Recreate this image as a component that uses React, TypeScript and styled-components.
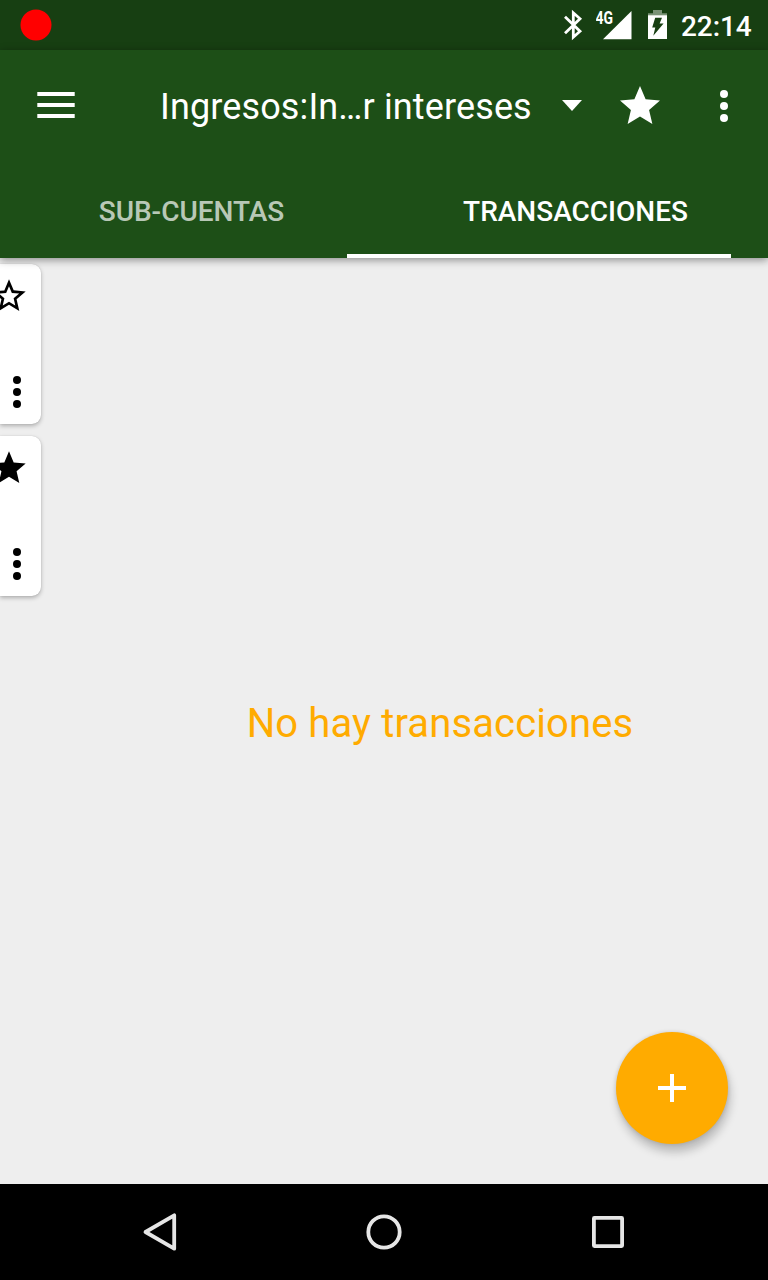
import React from "react";
import styled, { createGlobalStyle } from "styled-components";

const GlobalStyle = createGlobalStyle`
  * { box-sizing: border-box; }
  body { margin: 0; font-family: Roboto, "Liberation Sans", sans-serif; }
  svg { display: block; flex: none; }
`;

const Screen = styled.div`
  display: flex;
  flex-direction: column;
  width: 768px;
  height: 1280px;
  overflow: hidden;
  background: #eeeeee;
`;

const StatusBar = styled.div`
  display: flex;
  align-items: center;
  justify-content: space-between;
  height: 50px;
  padding: 0 16px 0 20px;
  background: #173f12;
  flex: none;
`;

const StatusIcons = styled.div`
  display: flex;
  align-items: center;
  height: 50px;
`;

const SignalSlot = styled.div`
  margin: 0 16px 0 13px;
`;

const Clock = styled.span`
  width: 71px;
  margin-left: 13px;
  color: #fff;
  font-size: 28px;
  font-weight: 500;
  line-height: 32px;
  letter-spacing: -0.1px;
  padding-top: 3px;
  white-space: nowrap;
`;

const Header = styled.header`
  position: relative;
  z-index: 1;
  height: 208px;
  flex: none;
  background: #1d4f17;
  box-shadow: 0 2px 8px rgba(0, 0, 0, 0.42);
`;

const Toolbar = styled.div`
  display: flex;
  align-items: center;
  height: 112px;
  padding: 0 20px 0 32px;
`;

const Spinner = styled.div`
  display: flex;
  align-items: center;
  width: 456px;
  margin-left: 80px;
`;

const Title = styled.span`
  width: 394px;
  padding-top: 2px;
  color: #fff;
  font-size: 36px;
  line-height: 42px;
  letter-spacing: 0.13px;
  white-space: nowrap;
`;

const IconButton = styled.button<{ $gap?: number }>`
  display: flex;
  align-items: center;
  justify-content: center;
  width: 48px;
  height: 48px;
  margin-left: ${(p) => p.$gap ?? 0}px;
  padding: 0;
  border: 0;
  background: none;
  flex: none;
`;

const Tabs = styled.div`
  position: relative;
  display: flex;
  height: 96px;
`;

const Tab = styled.div<{ $active?: boolean }>`
  display: flex;
  align-items: center;
  justify-content: center;
  width: 384px;
  padding: 2px 1px 0 0;
  color: ${(p) => (p.$active ? "#fff" : "rgba(255, 255, 255, 0.7)")};
  font-size: 28px;
  font-weight: 500;
`;

const Indicator = styled.div`
  position: absolute;
  left: 347px;
  bottom: 0;
  width: 384px;
  height: 4px;
  background: #fff;
`;

const Pager = styled.main`
  position: relative;
  display: flex;
  flex: 1;
  min-height: 0;
  overflow: hidden;
`;

const AccountList = styled.div`
  display: flex;
  flex-direction: column;
  gap: 12px;
  width: 41px;
  padding-top: 6px;
  flex: none;
`;

const Card = styled.div`
  display: flex;
  flex-direction: column;
  justify-content: space-between;
  align-items: flex-end;
  height: 160px;
  padding: 12px 12px 8px 0;
  border-radius: 0 9px 9px 0;
  background: #fff;
  box-shadow: 0 2px 4px rgba(0, 0, 0, 0.26), 0 0 1px rgba(0, 0, 0, 0.2);
`;

const CardMenu = styled.div`
  width: 48px;
  margin-right: -12px;
`;

const Transactions = styled.section`
  display: flex;
  align-items: center;
  justify-content: center;
  width: 768px;
  margin-left: 15px;
  padding-top: 6px;
  flex: none;
`;

const EmptyText = styled.p`
  margin: 0;
  color: #ffab00;
  font-size: 40px;
  line-height: 48px;
  letter-spacing: 0.13px;
  white-space: nowrap;
`;

const Fab = styled.button`
  position: absolute;
  right: 40px;
  bottom: 40px;
  display: flex;
  align-items: center;
  justify-content: center;
  width: 112px;
  height: 112px;
  padding: 0;
  border: 0;
  border-radius: 50%;
  background: #ffab00;
  box-shadow: 2px 8px 10px rgba(0, 0, 0, 0.22), 0 0 4px rgba(0, 0, 0, 0.14);
`;

const NavBar = styled.nav`
  display: flex;
  justify-content: center;
  align-items: center;
  gap: 176px;
  height: 96px;
  flex: none;
  background: #000;
`;

const Star = ({ size, color }: { size: number; color: string }) => (
  <svg width={size} height={size} viewBox="0 0 24 24" fill={color}>
    <path d="M12 17.27 18.18 21l-1.64-7.03L22 9.24l-7.19-.61L12 2 9.19 8.63 2 9.24l5.46 4.73L5.82 21z" />
  </svg>
);

const StarOutline = () => (
  <svg width="40" height="40" viewBox="0 0 24 24" fill="#000">
    <path d="M22 9.24l-7.19-.62L12 2 9.19 8.63 2 9.24l5.46 4.73L5.82 21 12 17.27 18.18 21l-1.63-7.03L22 9.24zM12 15.4l-3.76 2.27 1-4.28-3.32-2.88 4.38-.38L12 6.1l1.71 4.04 4.38.38-3.32 2.88 1 4.28L12 15.4z" />
  </svg>
);

const More = ({ color }: { color: string }) => (
  <svg width="48" height="48" viewBox="0 0 48 48" fill={color}>
    <circle cx="24" cy="12" r="4" />
    <circle cx="24" cy="24" r="4" />
    <circle cx="24" cy="36" r="4" />
  </svg>
);

const RecordDot = () => (
  <svg width="32" height="32" viewBox="0 0 32 32">
    <circle cx="16" cy="16" r="15.5" fill="#f00" />
  </svg>
);

const Bluetooth = () => (
  <svg width="20" height="32" viewBox="0 0 20 32" fill="none" stroke="#fff" strokeWidth="2.8">
    <path d="M2 7.8 17 22.2 10.3 28.2V3.8L17 9.8 2 24.2" />
  </svg>
);

const Signal = () => (
  <svg width="36" height="32" viewBox="0 0 36 32" fill="#fff">
    <path d="M35.5 2v28.3H7z" />
    <text x="-0.5" y="14.8" fontFamily="Roboto, sans-serif" fontSize="17.5" fontWeight="700" textLength="17.5" lengthAdjust="spacingAndGlyphs">4G</text>
  </svg>
);

const Battery = () => (
  <svg width="20" height="32" viewBox="0 0 20 32">
    <path d="M5 1h9v3.3h5V7H0V4.3h5z" fill="#7a9276" />
    <path d="M0 6.3h19V30H0z" fill="#fff" />
    <path d="M7.2 8.8h6.8l-2.4 5.8h4L5.3 26.8l2-8.2H4.2z" fill="#173f12" />
  </svg>
);

const Menu = () => (
  <svg width="48" height="48" viewBox="0 0 48 48" fill="#fff">
    <path d="M5.3 10h37.4v4H5.3zM5.3 21h37.4v4H5.3zM5.3 32h37.4v4H5.3z" />
  </svg>
);

const Caret = () => (
  <svg width="36" height="36" viewBox="0 0 36 36" fill="#fff">
    <path d="M8 12h20L18 23z" />
  </svg>
);

const Plus = () => (
  <svg width="48" height="48" viewBox="0 0 48 48" fill="#fff">
    <path d="M22 10h4v12h12v4H26v12h-4V26H10v-4h12z" />
  </svg>
);

const NavIcon = ({ children }: { children: React.ReactNode }) => (
  <svg width="48" height="48" viewBox="0 0 48 48" fill="none" stroke="#e6e6e6" strokeWidth="3.8" strokeLinejoin="round">
    {children}
  </svg>
);

export default function App() {
  return (
    <Screen>
      <GlobalStyle />
      <StatusBar>
        <RecordDot />
        <StatusIcons>
          <Bluetooth />
          <SignalSlot><Signal /></SignalSlot>
          <Battery />
          <Clock>22:14</Clock>
        </StatusIcons>
      </StatusBar>
      <Header>
        <Toolbar>
          <IconButton aria-label="Menú"><Menu /></IconButton>
          <Spinner>
            <Title>Ingresos:In…r intereses</Title>
            <Caret />
          </Spinner>
          <IconButton aria-label="Favorito"><Star size={48} color="#fff" /></IconButton>
          <IconButton $gap={36} aria-label="Más opciones"><More color="#fff" /></IconButton>
        </Toolbar>
        <Tabs>
          <Tab>SUB-CUENTAS</Tab>
          <Tab $active>TRANSACCIONES</Tab>
          <Indicator />
        </Tabs>
      </Header>
      <Pager>
        <AccountList>
          <Card>
            <StarOutline />
            <CardMenu><More color="#000" /></CardMenu>
          </Card>
          <Card>
            <Star size={40} color="#000" />
            <CardMenu><More color="#000" /></CardMenu>
          </Card>
        </AccountList>
        <Transactions>
          <EmptyText>No hay transacciones</EmptyText>
        </Transactions>
        <Fab aria-label="Añadir"><Plus /></Fab>
      </Pager>
      <NavBar>
        <NavIcon><path d="M38.2 7.3v33.4L9.5 24z" /></NavIcon>
        <NavIcon><circle cx="24" cy="24" r="15.7" /></NavIcon>
        <NavIcon><rect x="9.9" y="9.9" width="28.2" height="28.2" rx="0.5" /></NavIcon>
      </NavBar>
    </Screen>
  );
}
